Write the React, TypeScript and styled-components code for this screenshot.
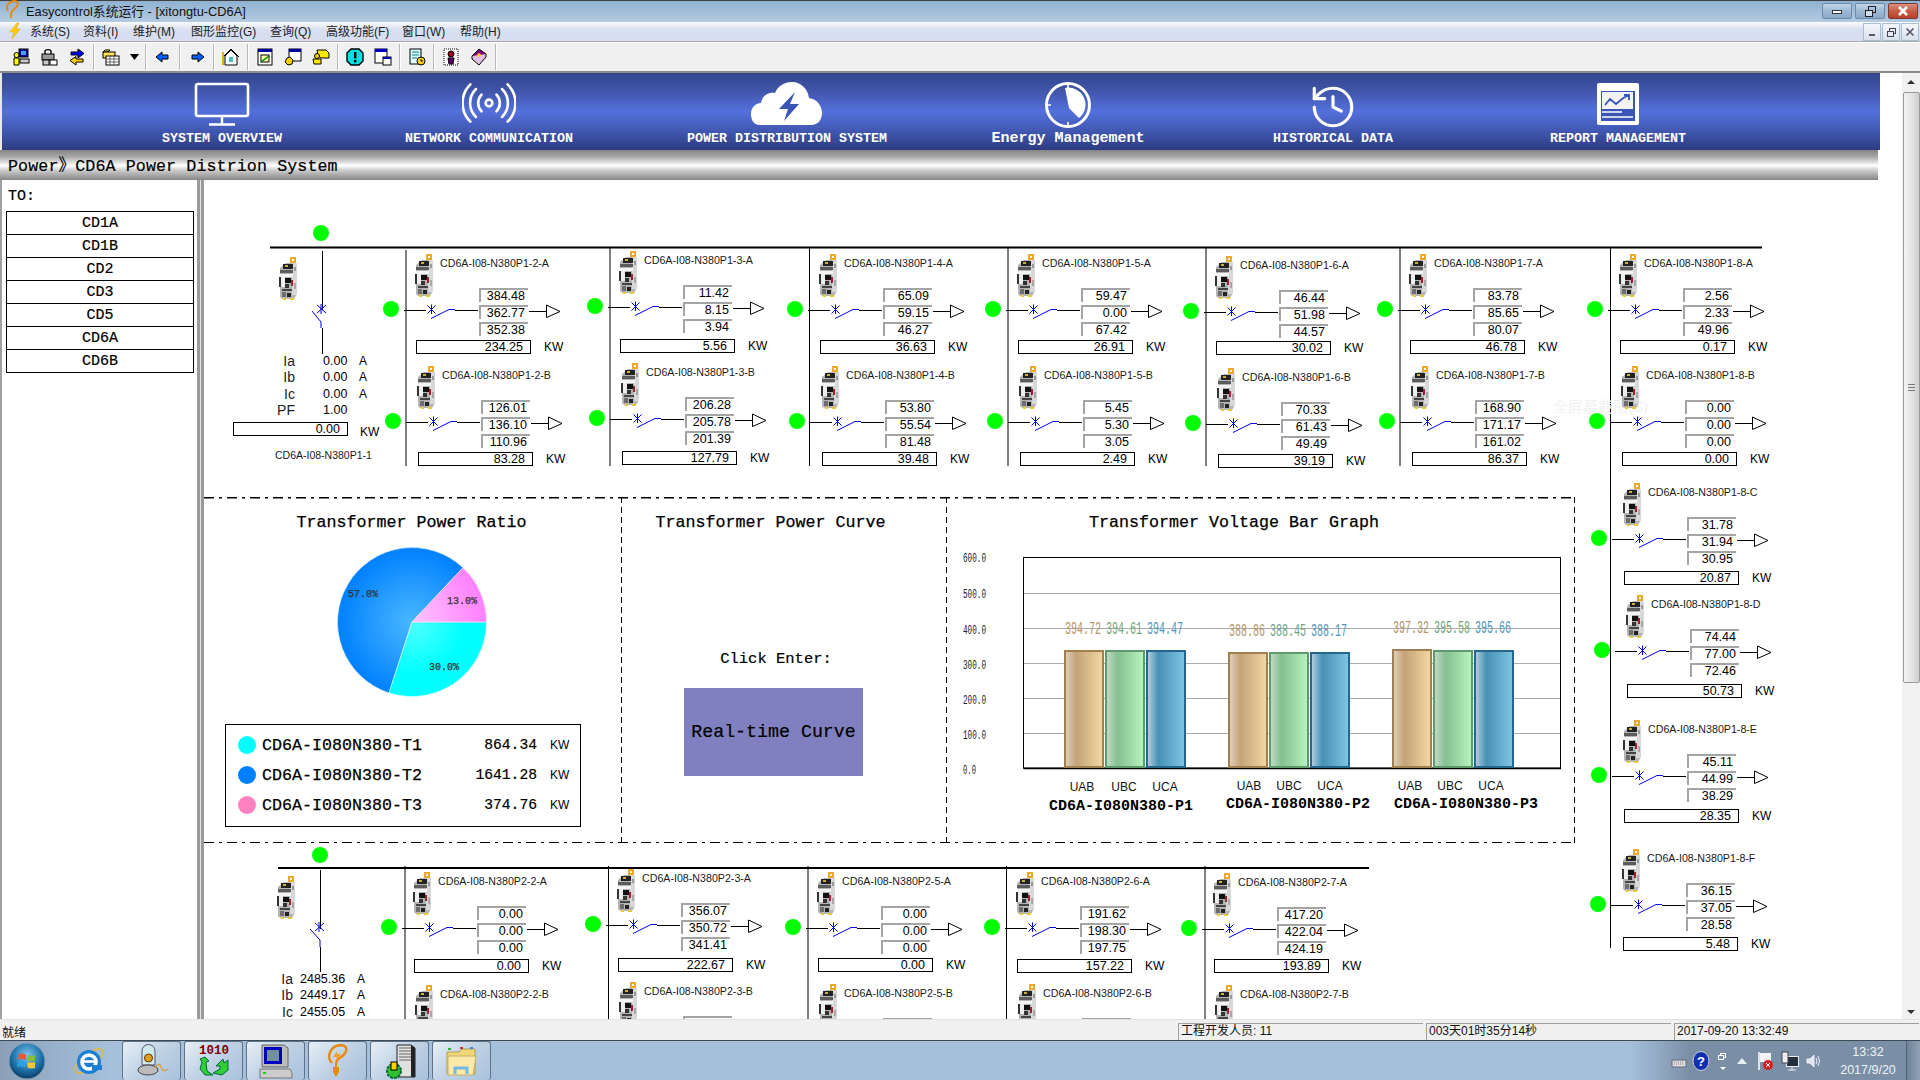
import React from "react";
import styled, { createGlobalStyle } from "styled-components";
import { History } from "lucide-react";

const MONO = '"Liberation Mono","Noto Sans CJK SC",monospace';
const SANS = '"Liberation Sans","Noto Sans CJK SC",sans-serif';

const Global = createGlobalStyle`
  html, body { margin: 0; padding: 0; width: 1920px; height: 1080px; overflow: hidden; background: #fff; }
  * { box-sizing: border-box; }
  #root { width: 1920px; height: 1080px; }
`;

const Shell = styled.div`
  width: 1920px; height: 1080px; display: flex; flex-direction: column; font-family: ${SANS}; color: #000; overflow: hidden;
`;

/* ---------- title bar ---------- */
const TitleBar = styled.div`
  height: 22px; flex: none; display: flex; align-items: center; padding: 0 0 3px 3px; gap: 5px; position: relative;
  border-top: 1px solid #404040;
  background: linear-gradient(#8fb2d2, #b4cbe1);
  font-size: 12.8px; color: #111;
`;
const CaptionGroup = styled.div`
  margin-left: auto; display: flex; gap: 3px; padding-right: 2px; align-self: flex-start; margin-top: 2px;
`;
const CaptionBtn = styled.div<{ $close?: boolean }>`
  width: 30px; height: 16px; border: 1px solid ${p => (p.$close ? "#7c3a33" : "#6c8aa8")}; border-radius: 2px;
  background: ${p => (p.$close ? "linear-gradient(#d9907e, #c75a3f 55%, #b8422c)" : "linear-gradient(#c3d6e8, #9db9d4 50%, #8ba9c8)")};
  display: flex; align-items: center; justify-content: center;
`;
const MenuBar = styled.div`
  height: 20px; flex: none; display: flex; align-items: center; font-size: 12px; color: #222;
  background: linear-gradient(#fafbfd, #d8dff0 40%, #d6ddef);
  border-bottom: 1px solid #a8a8a8; padding: 0 0 2px 8px;
`;
const MenuItem = styled.span<{ $w: number }>`
  width: ${p => p.$w}px; flex: none; white-space: nowrap;
`;
const MdiGroup = styled.div`
  margin-left: auto; display: flex; gap: 1px; padding-right: 1px; height: 18px; align-self: flex-start; margin-top: 1px;
`;
const MdiBtn = styled.div`
  width: 18px; height: 18px; border: 1px solid #a9bdd3; background: linear-gradient(#f4f7fb, #d8e0ef);
  display: flex; align-items: center; justify-content: center;
`;
const Toolbar = styled.div`
  height: 31px; flex: none; display: flex; align-items: center; padding-left: 7px; background: #f0f0f0;
  border-top: 1px solid #fff; border-bottom: 2px solid #8d8d8d; position: relative;
`;
const ToolBtn = styled.div<{ $w?: number }>`
  width: ${p => p.$w ?? 28}px; height: 22px; flex: none; display: flex; align-items: center; justify-content: center;
`;
const ToolSep = styled.div`
  width: 1px; height: 26px; background: #b8b8b8; margin: 0 2px; flex: none; border-right: 1px solid #fff; box-sizing: content-box;
`;
const Ic = styled.svg.attrs({ width: 18, height: 18, viewBox: "0 0 18 18" })`display: block;`;

/* ---------- workspace ---------- */
const Workspace = styled.div`
  flex: 1; min-height: 0; display: flex; background: #fff;
`;
const View = styled.div`
  flex: 1; min-width: 0; display: flex; flex-direction: column;
`;
const Banner = styled.div`
  height: 77px; flex: none; margin-right: 22px; display: flex; padding-left: 140px; padding-top: 9px;
  border-left: 2px solid #e8e8e8;
  background: linear-gradient(#34468e 0%, #3f55a8 22%, #5470dc 50%, #4057b0 76%, #2d3b80 100%);
`;
const NavItem = styled.div<{ $gap: number }>`
  width: 160px; margin-left: ${p => p.$gap}px; flex: none; display: flex; flex-direction: column; align-items: center; color: #fff;
`;
const NavIcon = styled.div`
  height: 49px; display: flex; align-items: flex-start; justify-content: center;
`;
const NavLabel = styled.div<{ $wide?: boolean }>`
  font: bold ${p => (p.$wide ? 15 : 13.33)}px/16px ${MONO}; white-space: nowrap; color: #fff;
`;
const Crumb = styled.div`
  height: 30px; flex: none; margin-right: 24px; padding: 0 0 2px 8px; display: flex; align-items: center;
  font: 16.67px ${MONO}; letter-spacing: .1px; color: #000; -webkit-text-stroke: .2px #000;
  background: linear-gradient(#858585 0%, #a6a6a6 22%, #d5d5d5 38%, #fff 52%, #d0d0d0 66%, #a8a8a8 84%, #868686 100%);
`;
const Body = styled.div`
  flex: 1; min-height: 0; display: flex;
`;
const Sidebar = styled.div`
  width: 197px; flex: none; border-left: 2px solid #a0a0a0; padding: 8px 0 0 4px; background: #fff;
`;
const ToLabel = styled.div`
  font: 15px/18px ${MONO}; margin-left: 2px; height: 23px; -webkit-text-stroke: .2px #000;
`;
const SideBtn = styled.div`
  width: 188px; height: 24px; margin-bottom: -1px; border: 1px solid #000; display: flex; align-items: center; justify-content: center;
  font: 15px ${MONO}; -webkit-text-stroke: .2px #000;
`;
const Divider = styled.div`
  width: 7px; flex: none; background: linear-gradient(90deg, #9a9a9a 0 3px, #e4e4e4 3px 4px, #9a9a9a 4px 7px);
`;
const Canvas = styled.div`
  position: relative; flex: 1; min-width: 0; overflow: hidden; background: #fff;
`;
const Wires = styled.svg`
  position: absolute; left: 0; top: 0; display: block;
`;
const Watermark = styled.div`
  position: absolute; left: 1349px; top: 215px; font-size: 15px; color: #f1f1f1; white-space: nowrap;
`;

/* ---------- scrollbar ---------- */
const ScrollBar = styled.div`
  width: 18px; flex: none; background: #f1f1f1; display: flex; flex-direction: column; align-items: center; position: relative; padding-top: 19px;
`;
const ScrollArrow = styled.div<{ $down?: boolean }>`
  position: absolute; ${p => (p.$down ? "bottom: 5px;" : "top: 7px;")} left: 5px; width: 0; height: 0;
  border-left: 4px solid transparent; border-right: 4px solid transparent;
  ${p => (p.$down ? "border-top: 4px solid #333;" : "border-bottom: 4px solid #333;")}
`;
const ScrollThumb = styled.div`
  width: 17px; height: 591px; border: 1px solid #9a9a9a; border-radius: 2px; background: linear-gradient(90deg, #f4f4f4, #e2e2e2 55%, #cfcfcf);
  display: flex; align-items: center; justify-content: center;
`;
const Grip = styled.div`
  width: 7px; height: 7px; background: repeating-linear-gradient(#777 0 1px, transparent 1px 3px);
`;

/* ---------- feeders ---------- */
const Feeder = styled.div<{ $x: number; $y: number }>`
  position: absolute; left: ${p => p.$x - 204}px; top: ${p => p.$y - 180}px; width: 0; height: 0;
`;
const Lamp = styled.div`
  position: absolute; left: -8px; top: -8px; width: 16px; height: 16px; border-radius: 50%; background: #00ff00;
`;
const FreeLamp = styled(Lamp) <{ $x: number; $y: number }>`
  left: ${p => p.$x - 212}px; top: ${p => p.$y - 188}px;
`;
const DeviceAt = styled.div`
  position: absolute; left: 24px; top: -55px;
`;
const FeederName = styled.div`
  position: absolute; left: 49px; top: -53px; font-size: 10.67px; line-height: 14px; white-space: nowrap; color: #1a1a1a;
`;
const FeederWire = styled.svg`
  position: absolute; left: 0; top: -20px; display: block;
`;
const Values = styled.div`
  position: absolute; left: 88px; top: -21px; width: 49px; display: flex; flex-direction: column; gap: 3px;
`;
const ValueCell = styled.div`
  height: 14px; border-left: 2px solid #a4a4a4; border-top: 2px solid #a4a4a4; padding-right: 3px;
  font-size: 12.5px; line-height: 12px; text-align: right; white-space: nowrap;
`;
const PowerBox = styled.div`
  width: 115px; height: 14px; border: 1px solid #000; padding-right: 7px; text-align: right; font-size: 12.5px; line-height: 12px; background: #fff;
`;
const PowerAt = styled.div<{ $dy: number }>`
  position: absolute; left: 25px; top: ${p => 31 + p.$dy}px;
`;
const KwAt = styled.span<{ $dy: number }>`
  position: absolute; left: 153px; top: ${p => 31 + p.$dy}px; font-size: 12px; line-height: 14px;
`;

const Incomer = styled.div<{ $x: number; $y: number; $cols: string }>`
  position: absolute; left: ${p => p.$x - 204}px; top: ${p => p.$y - 180}px;
  display: grid; grid-template-columns: ${p => p.$cols}; grid-auto-rows: 16.3px; align-items: center;
`;
const RLabel = styled.span`
  font-size: 14px; text-align: right; color: #222;
`;
const RValue = styled.span`font-size: 12.5px; white-space: nowrap;`;
const RUnit = styled.span`font-size: 12px;`;
const Placed = styled.div<{ $x: number; $y: number }>`
  position: absolute; left: ${p => p.$x - 204}px; top: ${p => p.$y - 180}px; white-space: nowrap;
`;
const SmallCaption = styled.span`font-size: 10.5px; color: #1a1a1a;`;

/* ---------- panels ---------- */
const Panels = styled.div`
  position: absolute; left: 0; top: 317px; width: 1371px; height: 346px; display: grid; grid-template-columns: 418px 325px 628px;
  background:
    repeating-linear-gradient(90deg, #000 0 10px, transparent 10px 15px, #000 15px 18px, transparent 18px 23px) top left / 100% 1.5px no-repeat,
    repeating-linear-gradient(90deg, #000 0 10px, transparent 10px 15px, #000 15px 18px, transparent 18px 23px) bottom left / 100% 1.5px no-repeat;
`;
const Panel = styled.div<{ $rule?: boolean }>`
  display: flex; flex-direction: column; align-items: center; padding-top: 17px;
  ${p => p.$rule ? `background: repeating-linear-gradient(#000 0 6px, transparent 6px 10px) right top / 1.5px 100% no-repeat;` : ""}
`;
const PanelTitle = styled.div<{ $shift?: number }>`
  font: 16.67px/18px ${MONO}; white-space: nowrap; margin-right: ${p => p.$shift ?? 0}px; -webkit-text-stroke: .25px #000;
`;
const PieWrap = styled.svg`
  display: block; margin-top: 14px; margin-right: 2px; flex: none;
`;
const Legend = styled.div`
  margin-top: 26px; margin-right: 20px; width: 356px; height: 103px; border: 1.5px solid #000; padding: 5px 0 0 12px;
  display: grid; grid-template-columns: 18px 184px 97px 44px; grid-auto-rows: 30px; align-items: center;
`;
const LegendDot = styled.span<{ $c: string }>`
  width: 18px; height: 18px; border-radius: 50%; background: ${p => p.$c};
`;
const LegendName = styled.span`
  font: 16.67px ${MONO}; padding-left: 6px; white-space: nowrap; -webkit-text-stroke: .25px #000;
`;
const LegendValue = styled.span`
  font: 14.67px ${MONO}; text-align: right; -webkit-text-stroke: .2px #000;
`;
const LegendUnit = styled.span`
  font-size: 12px; padding-left: 13px;
`;
const ClickText = styled.div`
  font: 15.5px ${MONO}; margin-top: 118px; margin-right: 17px; -webkit-text-stroke: .2px #000;
`;
const CurveBtn = styled.div`
  width: 179px; height: 88px; margin-top: 20px; margin-right: 22px; background: #8080c0; display: flex; align-items: center; justify-content: center;
  font: 18.3px ${MONO}; color: #000; -webkit-text-stroke: .2px #000;
`;
const ChartSvg = styled.svg`
  display: block; margin-top: 7px; flex: none;
`;

/* ---------- status / taskbar ---------- */
const StatusBar = styled.div`
  height: 21px; flex: none; background: #f0f0f0; display: flex; align-items: center; font-size: 12px; border-top: 1px solid #e2e2e2; padding: 2px 0 0 2px;
`;
const StatusReady = styled.span`width: 1176px; flex: none; color: #111;`;
const StatusPane = styled.div`
  width: 245px; height: 17px; flex: none; margin-right: 3px; border-top: 1px solid #a0a0a0; border-left: 1px solid #a0a0a0; padding-left: 2px; line-height: 15px; color: #111;
`;
const Taskbar = styled.div`
  height: 40px; flex: none; display: flex; align-items: stretch; position: relative; border-top: 1px solid #3d4a58;
  background: linear-gradient(90deg, #8aa0b8 0, #a6c0da 110px, #a6c0da 1630px, #7a8fa6 1690px, #7a8fa6 100%);
`;
const StartSlot = styled.div`
  width: 122px; flex: none; display: flex; align-items: center; padding-left: 8px; gap: 26px;
`;
const TaskBtn = styled.div`
  width: 59px; margin-right: 3px; flex: none; display: flex; align-items: center; justify-content: center;
  border: 1px solid #5f738a; border-radius: 3px; border-bottom: none;
  background: linear-gradient(135deg, #e8eff7, #bfd1e4 50%, #a9c2dc);
`;
const Tray = styled.div`
  margin-left: auto; display: flex; align-items: center; width: 252px;
`;
const TrayIcon = styled.div<{ $w: number }>`
  width: ${p => p.$w}px; flex: none; display: flex; justify-content: center;
`;
const Clock = styled.div`
  width: 76px; flex: none; text-align: center; color: #eef3f8; font-size: 12.5px; line-height: 18px;
`;
const ShowDesktop = styled.div`
  width: 14px; align-self: stretch; flex: none; border-left: 1px solid #4f6277; background: linear-gradient(90deg, #6f8398, #8ea1b5);
`;

/* ---------- drawings ---------- */
const Device = () => (
  <svg width="20" height="44" viewBox="0 0 20 44" style={{ display: "block" }}>
    <rect x="11" y="0" width="6" height="6" fill="#f0a828" />
    <rect x="13" y="2" width="2" height="2" fill="#fff" />
    <path d="M1 11 L7 6 H18 V37 L15 42 H3 L1 40Z" fill="#b4b4b4" />
    <rect x="13" y="6" width="5" height="32" fill="#d8d8d8" />
    <rect x="4" y="7" width="10" height="5" fill="#222" />
    <rect x="6" y="8" width="3" height="2" fill="#c8b040" />
    <rect x="1" y="13" width="13" height="3" fill="#5c5c5c" />
    <rect x="1" y="17" width="13" height="3" fill="#f4f4f4" />
    <rect x="1" y="20" width="5" height="10" fill="#eee" />
    <rect x="0" y="20" width="2" height="10" fill="#333" />
    <rect x="6" y="21" width="6" height="5" fill="#111" />
    <rect x="12" y="23" width="2" height="6" fill="#a02030" />
    <rect x="6" y="27" width="4" height="4" fill="#333" />
    <rect x="15" y="10" width="2" height="4" fill="#999" />
    <rect x="15" y="26" width="2" height="6" fill="#a8a8a8" />
    <rect x="3" y="32" width="10" height="2" fill="#444" />
    <rect x="3" y="35" width="4" height="5" fill="#6e6e6e" />
    <rect x="8" y="36" width="4" height="4" fill="#222" />
    <rect x="4" y="41" width="3" height="2" fill="#e8c838" />
    <rect x="11" y="41" width="4" height="2" fill="#e8c838" />
  </svg>
);

const wireBlue = "#0000ee";
const FeederWires = () => (
  <FeederWire width="172" height="40" viewBox="0 -20 172 40">
    <path d="M13 1.5H35M64 1.5H87M138 2.5H155" stroke="#000" fill="none" />
    <path d="M36.5 -3.5L44.5 4.5M36.5 4.5L44.5 -3.5M40.5 -4.5V5" stroke={wireBlue} fill="none" />
    <path d="M40 9.5L58 0.5H64" stroke={wireBlue} fill="none" />
    <path d="M155.5 -4V8.5L169 2.5Z" stroke="#000" fill="#fff" />
  </FeederWire>
);

type U = { x: number; y: number; name: string; v: string[]; pd?: number };
const Unit = ({ x, y, name, v, pd = 0 }: U) => (
  <Feeder $x={x} $y={y}>
    <FeederWires />
    <Lamp />
    <DeviceAt><Device /></DeviceAt>
    <FeederName>{name}</FeederName>
    <Values>
      {v.slice(0, 3).map((t, i) => <ValueCell key={i}>{t}</ValueCell>)}
    </Values>
    <PowerAt $dy={pd}><PowerBox>{v[3]}</PowerBox></PowerAt>
    <KwAt $dy={pd}>KW</KwAt>
  </Feeder>
);

const ND = "CD6A-I08-N380";
const units: U[] = [
  { x: 391, y: 309, name: ND + "P1-2-A", v: ["384.48", "362.77", "352.38", "234.25"] },
  { x: 595, y: 306, pd: 2, name: ND + "P1-3-A", v: ["11.42", "8.15", "3.94", "5.56"] },
  { x: 795, y: 309, name: ND + "P1-4-A", v: ["65.09", "59.15", "46.27", "36.63"] },
  { x: 993, y: 309, name: ND + "P1-5-A", v: ["59.47", "0.00", "67.42", "26.91"] },
  { x: 1191, y: 311, pd: -1, name: ND + "P1-6-A", v: ["46.44", "51.98", "44.57", "30.02"] },
  { x: 1385, y: 309, name: ND + "P1-7-A", v: ["83.78", "85.65", "80.07", "46.78"] },
  { x: 1595, y: 309, name: ND + "P1-8-A", v: ["2.56", "2.33", "49.96", "0.17"] },
  { x: 393, y: 421, name: ND + "P1-2-B", v: ["126.01", "136.10", "110.96", "83.28"] },
  { x: 597, y: 418, pd: 2, name: ND + "P1-3-B", v: ["206.28", "205.78", "201.39", "127.79"] },
  { x: 797, y: 421, name: ND + "P1-4-B", v: ["53.80", "55.54", "81.48", "39.48"] },
  { x: 995, y: 421, name: ND + "P1-5-B", v: ["5.45", "5.30", "3.05", "2.49"] },
  { x: 1193, y: 423, name: ND + "P1-6-B", v: ["70.33", "61.43", "49.49", "39.19"] },
  { x: 1387, y: 421, name: ND + "P1-7-B", v: ["168.90", "171.17", "161.02", "86.37"] },
  { x: 1597, y: 421, name: ND + "P1-8-B", v: ["0.00", "0.00", "0.00", "0.00"] },
  { x: 1599, y: 538, pd: 2, name: ND + "P1-8-C", v: ["31.78", "31.94", "30.95", "20.87"] },
  { x: 1602, y: 650, pd: 3, name: ND + "P1-8-D", v: ["74.44", "77.00", "72.46", "50.73"] },
  { x: 1599, y: 775, pd: 3, name: ND + "P1-8-E", v: ["45.11", "44.99", "38.29", "28.35"] },
  { x: 1598, y: 904, pd: 2, name: ND + "P1-8-F", v: ["36.15", "37.05", "28.58", "5.48"] },
  { x: 389, y: 927, pd: 1, name: ND + "P2-2-A", v: ["0.00", "0.00", "0.00", "0.00"] },
  { x: 593, y: 924, pd: 3, name: ND + "P2-3-A", v: ["356.07", "350.72", "341.41", "222.67"] },
  { x: 793, y: 927, name: ND + "P2-5-A", v: ["0.00", "0.00", "0.00", "0.00"] },
  { x: 992, y: 927, pd: 1, name: ND + "P2-6-A", v: ["191.62", "198.30", "197.75", "157.22"] },
  { x: 1189, y: 928, name: ND + "P2-7-A", v: ["417.20", "422.04", "424.19", "193.89"] },
  { x: 391, y: 1040, name: ND + "P2-2-B", v: ["", "", "", ""] },
  { x: 595, y: 1037, name: ND + "P2-3-B", v: ["", "", "", ""] },
  { x: 795, y: 1039, name: ND + "P2-5-B", v: ["", "", "", ""] },
  { x: 994, y: 1039, name: ND + "P2-6-B", v: ["", "", "", ""] },
  { x: 1191, y: 1040, name: ND + "P2-7-B", v: ["", "", "", ""] },
];

const BusWires = () => (
  <Wires width="1698" height="839" viewBox="204 180 1698 839">
    <g stroke="#000" fill="none">
      <path d="M270 247.5H1762M278 868H1369" strokeWidth="2.2" />
      <path d="M406 250V466M610 248V466M809.5 248V466M1008 248V466M1206 248V466M1400 248V466M1610.5 248V948" />
      <path d="M405 866V1019M608.5 866V1019M808 866V1019M1006.5 866V1019M1205 866V1019" />
      <path d="M322.5 251V310M322.5 328V354M320.5 870V929M320.5 947V972" />
    </g>
    <g stroke={wireBlue} fill="none">
      <path d="M317 305L326 313M317 313L326 305M321 304V314M312 311L321 322V328" />
      <path d="M315 923L324 931M315 931L324 923M319 922V932M310 929L320 940V947" />
    </g>
  </Wires>
);

const PieChart = () => (
  <PieWrap width="152" height="152" viewBox="-76 -76 152 152">
    <defs>
      <radialGradient id="gp" gradientUnits="userSpaceOnUse" cx="0" cy="0" r="74.5"><stop offset="0" stopColor="#ffc4ff" /><stop offset="1" stopColor="#ff80ff" /></radialGradient>
      <radialGradient id="gb" gradientUnits="userSpaceOnUse" cx="0" cy="0" r="74.5"><stop offset="0" stopColor="#4ab8ff" /><stop offset="1" stopColor="#0080ff" /></radialGradient>
      <radialGradient id="gc" gradientUnits="userSpaceOnUse" cx="0" cy="0" r="74.5"><stop offset="0" stopColor="#52ffff" /><stop offset=".7" stopColor="#00ffff" /></radialGradient>
    </defs>
    <path d="M0 0L-23 70.9A74.5 74.5 0 1 1 51 -54.3Z" fill="url(#gb)" stroke="#cfe6ff" strokeWidth=".6" />
    <path d="M0 0L74.5 0A74.5 74.5 0 0 1 -23 70.9Z" fill="url(#gc)" stroke="#e0ffff" strokeWidth=".6" />
    <path d="M0 0L51 -54.3A74.5 74.5 0 0 1 74.5 0Z" fill="url(#gp)" stroke="#ffe6ff" strokeWidth=".6" />
    <g fontFamily={MONO} fontSize="10" fill="#333" stroke="#333" strokeWidth=".25">
      <text x="-64" y="-25">57.0%</text>
      <text x="35" y="-18">13.0%</text>
      <text x="17" y="48">30.0%</text>
    </g>
  </PieWrap>
);

const barColors = [
  { id: "t", edge: "#a08050", txt: "#b39568", a: "#e0d2bf", b: "#c4a377", c: "#f4d7a4" },
  { id: "g", edge: "#5f9a6d", txt: "#6ea67c", a: "#c6dcca", b: "#84c090", c: "#b8f4bf" },
  { id: "b", edge: "#25688c", txt: "#4f95ba", a: "#b8d2e2", b: "#4690b4", c: "#80c6e6" },
];
const groups = [
  { xs: [1064, 1105, 1146], tops: [651, 651, 651], vals: ["394.72", "394.61", "394.47"], vy: 635, uy: 792, us: [1082, 1124, 1165], name: "CD6A-I080N380-P1", nx: 1049, ny: 811 },
  { xs: [1228, 1269, 1310], tops: [653, 653, 653], vals: ["388.86", "388.45", "388.17"], vy: 637, uy: 791, us: [1249, 1289, 1330], name: "CD6A-I080N380-P2", nx: 1226, ny: 809 },
  { xs: [1392, 1433, 1474], tops: [650, 651, 651], vals: ["397.32", "395.58", "395.66"], vy: 634, uy: 791, us: [1410, 1450, 1491], name: "CD6A-I080N380-P3", nx: 1394, ny: 809 },
];
const ticks = [["600.0", 559], ["500.0", 595], ["400.0", 631], ["300.0", 666], ["200.0", 701], ["100.0", 736], ["0.0", 771]] as const;

const BarChart = () => (
  <ChartSvg width="628" height="302" viewBox="947 540 628 302">
    <defs>
      {barColors.map(c => (
        <linearGradient key={c.id} id={"bar" + c.id} x1="0" x2="1" y1="0" y2="0">
          <stop offset="0" stopColor={c.a} /><stop offset=".3" stopColor={c.b} /><stop offset="1" stopColor={c.c} />
        </linearGradient>
      ))}
    </defs>
    <rect x="1023.5" y="558.5" width="537" height="210.5" fill="#fff" stroke="#000" />
    <path d="M1024 594.5H1560M1024 629.5H1560M1024 664.5H1560M1024 699.5H1560M1024 734.5H1560" stroke="#aaa" />
    <path d="M1023.5 769.5H1561" stroke="#000" strokeWidth="1.4" />
    {ticks.map(([t, y]) => (
      <text key={t} x="963" y={y + 4} fontFamily={MONO} fontSize="13" fill="#222" textLength={t.length === 3 ? 13 : 23} lengthAdjust="spacingAndGlyphs">{t}</text>
    ))}
    {groups.map(g => (
      <g key={g.name}>
        {g.xs.map((x, i) => (
          <g key={x}>
            <rect x={x + 1} y={g.tops[i] + 1} width="38" height={769 - g.tops[i] - 2} fill={`url(#bar${barColors[i].id})`} stroke={barColors[i].edge} strokeWidth="2" />
            <text x={x + 1} y={g.vy} fontFamily={MONO} fontSize="17.5" fill={barColors[i].txt} textLength="36" lengthAdjust="spacingAndGlyphs">{g.vals[i]}</text>
            <text x={g.us[i]} y={g.uy} textAnchor="middle" fontFamily={SANS} fontSize="12" fill="#111">{["UAB", "UBC", "UCA"][i]}</text>
          </g>
        ))}
        <text x={g.nx} y={g.ny} fontFamily={MONO} fontSize="15" fontWeight="bold" fill="#000">{g.name}</text>
      </g>
    ))}
  </ChartSvg>
);

const MonitorIcon = () => (
  <svg width="56" height="44" viewBox="0 0 56 44" fill="none" stroke="#fff">
    <rect x="2" y="2" width="52" height="32" rx="2" strokeWidth="2.6" />
    <path d="M28 34V42M15 42.5H41" strokeWidth="2.4" />
  </svg>
);
const WaveIcon = () => (
  <svg width="54" height="42" viewBox="0 0 58 44" fill="none" stroke="#fff" strokeWidth="2.8" strokeLinecap="round">
    <circle cx="29" cy="22" r="3.6" />
    <path d="M21 13A13 13 0 0 0 21 31M37 13A13 13 0 0 1 37 31" />
    <path d="M15 7A21 21 0 0 0 15 37M43 7A21 21 0 0 1 43 37" />
    <path d="M9 2A28 28 0 0 0 9 42M49 2A28 28 0 0 1 49 42" />
  </svg>
);
const CloudIcon = () => (
  <svg width="72" height="44" viewBox="0 0 72 44">
    <path d="M9 43C2 43 0 37 0 32C0 25 5 21 10 21C11 14 17 10 24 11C27 4 33 0 41 0C50 0 57 7 58 16C66 17 71 24 71 31C71 38 67 43 60 43Z" fill="#fff" />
    <path d="M44 10L28 27H37L33 39L48 22H39Z" fill="#3a54b8" />
  </svg>
);
const GaugeIcon = () => (
  <svg width="48" height="46" viewBox="0 0 48 46" fill="none" stroke="#fff">
    <circle cx="24" cy="23" r="21.5" strokeWidth="3" />
    <path d="M21 6A17 17 0 0 1 35 36L25 26Z" fill="#fff" stroke="none" />
    <path d="M24 2V6M24 40V44M3 23H7" strokeWidth="1.6" />
  </svg>
);
const ReportIcon = () => (
  <svg width="44" height="44" viewBox="0 0 44 44" fill="none">
    <rect x="1" y="1" width="42" height="42" rx="2" fill="#fff" />
    <rect x="5" y="9" width="34" height="30" fill="#3a54b8" />
    <rect x="6" y="10" width="31" height="17" fill="#f2f2f2" />
    <path d="M9 23L14 17L20 22L26 17L32 13M28 13H33V18" stroke="#3a54b8" strokeWidth="1.8" />
    <path d="M6 30H26M6 35H37" stroke="#fff" strokeWidth="1.5" />
  </svg>
);

const tb = {
  user: <Ic><rect x="7" y="1" width="9" height="8" fill="#0000a0" stroke="#000" /><rect x="9" y="3" width="5" height="4" fill="#40a0ff" /><rect x="8" y="11" width="9" height="4" fill="#ccc" stroke="#000" /><circle cx="4.5" cy="7" r="2.5" fill="#ff0" stroke="#000" /><path d="M2 10H7V17H2Z" fill="#ff0" stroke="#000" /></Ic>,
  lock: <Ic><path d="M5 6V3.5C5 1 11 1 11 3.5V6" stroke="#000" fill="none" strokeWidth="1.4" /><rect x="2" y="6" width="12" height="6" fill="#999" stroke="#000" /><rect x="3" y="12" width="6" height="5" fill="#ccc" stroke="#000" /><rect x="10" y="12" width="7" height="5" fill="#fff" stroke="#000" /></Ic>,
  swap: <Ic><path d="M3 4H10V1L16 5.5L10 10V7H3Z" fill="#0000ff" stroke="#000" /><path d="M15 11H8V8.5L2 12.5L8 17V14H15Z" fill="#ffd000" stroke="#000" /></Ic>,
  folder: <Ic><path d="M1 4H6L8 2H3Z" fill="#ff0" stroke="#000" /><rect x="1" y="4" width="12" height="6" fill="#ffe060" stroke="#000" /><rect x="4" y="8" width="13" height="9" fill="#fff" stroke="#000" /><path d="M4 11H17M4 14H17M8 8V17M12 8V17" stroke="#666" /></Ic>,
  left: <Ic><path d="M14 7H8V4L2 9L8 14V11H14Z" fill="#0060ff" stroke="#000" /></Ic>,
  right: <Ic><path d="M4 7H10V4L16 9L10 14V11H4Z" fill="#0060ff" stroke="#000" /></Ic>,
  house: <Ic><path d="M1 9L9 1L17 9" stroke="#000" fill="none" /><path d="M3 8V17H15V8L9 2Z" fill="#fff" stroke="#000" /><rect x="7" y="9" width="4" height="5" fill="#40c0c0" /><path d="M1 4V17" stroke="#e0b000" strokeWidth="2" /></Ic>,
  winImg: <Ic><rect x="2" y="1" width="14" height="16" fill="#fff" stroke="#000" /><rect x="2" y="1" width="14" height="3" fill="#0000a0" /><rect x="5" y="7" width="8" height="7" fill="#ffffa0" stroke="#000" /><path d="M5 14L13 8" stroke="#008000" strokeWidth="1.5" /></Ic>,
  winStar: <Ic><rect x="5" y="1" width="12" height="12" fill="#fff" stroke="#000" /><rect x="5" y="1" width="12" height="3" fill="#0000a0" /><path d="M4 17L1 14L3 10L6 9L9 12L8 16Z" fill="#ffd000" stroke="#000" /></Ic>,
  talk: <Ic><path d="M5 2H14L17 5V10H9L6 8Z" fill="#ffea00" stroke="#000" /><path d="M1 11H9V16H2Z" fill="#ffea00" stroke="#000" /><circle cx="5" cy="8" r="2.5" fill="#ffd000" stroke="#000" /></Ic>,
  alert: <Ic><path d="M5 1H13L17 5V13L13 17H5L1 13V5Z" fill="#00e0e0" stroke="#000" strokeWidth="1.4" /><rect x="8" y="4" width="2.4" height="6.5" fill="#000" /><rect x="8" y="12" width="2.4" height="2.4" fill="#000" /></Ic>,
  windows: <Ic><rect x="1" y="1" width="12" height="14" fill="#fff" stroke="#000" /><rect x="1" y="1" width="12" height="3" fill="#0000c0" /><rect x="9" y="9" width="8" height="8" fill="#fff" stroke="#000" /><rect x="9" y="9" width="8" height="2" fill="#0000c0" /></Ic>,
  doc: <Ic><rect x="2" y="1" width="11" height="15" fill="#e0ffff" stroke="#000" /><path d="M4 4H11M4 7H11M4 10H9" stroke="#008080" /><circle cx="13" cy="13" r="4" fill="#ffd000" stroke="#000" /><path d="M13 11V13H15" stroke="#000" fill="none" /></Ic>,
  person: <Ic><rect x="2" y="1" width="14" height="16" fill="#f8f8f8" stroke="#000" strokeDasharray="1 1" /><circle cx="9" cy="6" r="3" fill="#a00020" stroke="#000" /><path d="M6 10H12L11 16H7Z" fill="#600060" stroke="#000" /></Ic>,
  book: <Ic><path d="M2 8L9 1L16 6L9 14Z" fill="#800080" stroke="#000" /><path d="M2 8V11L9 17L16 9V6" fill="#e0c0e0" stroke="#000" /><circle cx="9" cy="7" r="1.8" fill="#ffd000" /></Ic>,
  caret: <svg width="9" height="6" viewBox="0 0 9 6" style={{ display: "block" }}><path d="M0 0H9L4.5 6Z" fill="#000" /></svg>,
};

const Orb = () => (
  <svg width="38" height="38" viewBox="0 0 38 38">
    <defs><radialGradient id="orb" cx=".5" cy=".35" r=".7"><stop offset="0" stopColor="#7fc6ef" /><stop offset=".6" stopColor="#1b6fa8" /><stop offset="1" stopColor="#0b3050" /></radialGradient></defs>
    <circle cx="19" cy="19" r="18" fill="url(#orb)" stroke="#8aa2b8" />
    <path d="M11 12Q14 11 18 12.5V18Q14 16.5 10 17.5Z" fill="#e85a30" />
    <path d="M19.5 13Q23 15 27 13V18.5Q23 20 19.5 18.5Z" fill="#7bc043" />
    <path d="M10 19Q14 18 18 19.5V25Q14 23.5 9 25Z" fill="#2f9fe0" />
    <path d="M19.5 20Q23 21.5 27 20V26Q23 27 19.5 25.5Z" fill="#f5c830" />
  </svg>
);
const IeLogo = () => (
  <svg width="34" height="34" viewBox="0 0 34 34">
    <ellipse cx="17" cy="17" rx="17" ry="7" transform="rotate(-40 17 17)" fill="none" stroke="#e0b840" strokeWidth="1.6" />
    <circle cx="17" cy="18" r="12" fill="#1c7fd4" />
    <circle cx="17" cy="18" r="7" fill="none" stroke="#fff" strokeWidth="3.6" />
    <path d="M9 17.5H25" stroke="#fff" strokeWidth="2.6" />
    <path d="M20 21H30V26H20Z" fill="#1c7fd4" />
  </svg>
);
const TaskIcons = [
  <svg key="a" width="34" height="36" viewBox="0 0 34 36"><path d="M7 22V8A6.5 6.5 0 0 1 20 8V22Z" fill="#cfe8e8" stroke="#557" /><circle cx="13.5" cy="15" r="4" fill="#e0a020" stroke="#630" /><ellipse cx="13" cy="27" rx="10" ry="5" fill="#bbb" stroke="#444" /><path d="M20 25Q24 18 26 24T33 26" stroke="#d8a040" fill="none" strokeWidth="1.4" /></svg>,
  <svg key="b" width="36" height="36" viewBox="0 0 36 36"><text x="18" y="11" textAnchor="middle" fontFamily={MONO} fontWeight="bold" fontSize="12.5" fill="#800000">1010</text><path d="M4 16L9 14L13 18L10 19L11 28L17 32L9 32L4 26L6 19Z" fill="#30d030" stroke="#064" /><path d="M32 17V27L26 32L17 30L24 26V23L20 23L27 16L28 20Z" fill="#30d030" stroke="#064" /></svg>,
  <svg key="c" width="36" height="36" viewBox="0 0 36 36"><path d="M4 2H26L30 5V24H4Z" fill="#bbb" stroke="#666" /><rect x="6" y="4" width="18" height="17" fill="#0000c0" /><rect x="9" y="7" width="12" height="11" fill="#7090a0" /><path d="M2 26H32L34 30V35H2Z" fill="#ccc" stroke="#777" /><rect x="5" y="29" width="3" height="2" fill="#20d020" /></svg>,
  <svg key="d" width="28" height="36" viewBox="0 0 28 36" fill="none"><path d="M8 20C2 14 6 2 18 2C26 4 22 12 14 16L12 20" stroke="#e88a10" strokeWidth="2.4" /><path d="M13 8L9 14H13L11 19L17 11H13Z" fill="#f4a020" /><path d="M12 20V24" stroke="#e88a10" strokeWidth="2" /><path d="M9 24H15V29L12 34L9 29Z" fill="#e88a10" /></svg>,
  <svg key="e" width="34" height="36" viewBox="0 0 34 36"><path d="M14 2H28L32 5V34H14Z" fill="#e0e0e0" stroke="#222" /><path d="M16 5H28M16 8H28M16 11H28M16 14H28M16 17H28" stroke="#666" /><path d="M28 2L32 5V34H28Z" fill="#222" /><circle cx="11" cy="28" r="7" fill="#30c030" stroke="#063" strokeDasharray="3 1" strokeWidth="2" /><rect x="8" y="19" width="6" height="8" fill="#ffd000" stroke="#000" /></svg>,
  <svg key="f" width="34" height="34" viewBox="0 0 34 34"><path d="M2 8H14L17 5H30V30H2Z" fill="#f0d77a" stroke="#b09a50" /><rect x="3" y="4" width="3" height="2" fill="#30b030" /><rect x="15" y="3" width="3" height="2" fill="#d03030" /><rect x="25" y="3" width="3" height="2" fill="#3090e0" /><path d="M3 12H31L28 31H3Z" fill="#fae9a8" stroke="#c8b060" /><path d="M10 30V24H22V30" stroke="#70b8e8" strokeWidth="3" fill="none" /></svg>,
];

const stroke = { stroke: "#fff", fill: "none" } as const;

export default function App() {
  return (
    <Shell>
      <Global />
      <TitleBar>
        <svg width="18" height="20" viewBox="0 0 18 20" fill="none"><path d="M5 11C2 6 6 1 12 1C17 2 15 7 10 10L8 13" stroke="#e88a10" strokeWidth="2" /><path d="M8 13V18" stroke="#e88a10" strokeWidth="2" /></svg>
        <span>Easycontrol系统运行 - [xitongtu-CD6A]</span>
        <CaptionGroup>
          <CaptionBtn><svg width="12" height="8"><rect x="1.5" y="3.5" width="9" height="3" fill="#fff" stroke="#333" /></svg></CaptionBtn>
          <CaptionBtn><svg width="13" height="13"><rect x="4.5" y="1.5" width="7" height="6" fill="none" stroke="#222" /><rect x="1.5" y="5.5" width="7" height="6" fill="#cde" stroke="#222" /></svg></CaptionBtn>
          <CaptionBtn $close><svg width="14" height="12"><path d="M3 2L11 10M11 2L3 10" stroke="#fff" strokeWidth="2.6" /></svg></CaptionBtn>
        </CaptionGroup>
      </TitleBar>
      <MenuBar>
        <svg width="14" height="18" viewBox="0 0 14 18" style={{ marginRight: 8, flex: "none" }}><path d="M9 1L2 10H6L4 17L12 7H8L11 1Z" fill="#ffcc00" stroke="#e8a000" strokeWidth=".5" /></svg>
        <MenuItem $w={53}>系统(S)</MenuItem>
        <MenuItem $w={50}>资料(I)</MenuItem>
        <MenuItem $w={58}>维护(M)</MenuItem>
        <MenuItem $w={79}>图形监控(G)</MenuItem>
        <MenuItem $w={56}>查询(Q)</MenuItem>
        <MenuItem $w={76}>高级功能(F)</MenuItem>
        <MenuItem $w={58}>窗口(W)</MenuItem>
        <MenuItem $w={60}>帮助(H)</MenuItem>
        <MdiGroup>
          <MdiBtn><svg width="10" height="10"><rect x="2" y="7" width="6" height="2" fill="#556" /></svg></MdiBtn>
          <MdiBtn><svg width="11" height="11"><rect x="3.5" y="1.5" width="6" height="5" fill="none" stroke="#445" /><rect x="1.5" y="4.5" width="6" height="5" fill="#e4e9f4" stroke="#445" /></svg></MdiBtn>
          <MdiBtn><svg width="10" height="10"><path d="M1.5 1.5L8.5 8.5M8.5 1.5L1.5 8.5" stroke="#556" strokeWidth="1.6" /></svg></MdiBtn>
        </MdiGroup>
      </MenuBar>
      <Toolbar>
        <ToolBtn>{tb.user}</ToolBtn><ToolBtn>{tb.lock}</ToolBtn><ToolBtn>{tb.swap}</ToolBtn><ToolSep />
        <ToolBtn>{tb.folder}</ToolBtn><ToolBtn $w={18}>{tb.caret}</ToolBtn><ToolSep />
        <ToolBtn>{tb.left}</ToolBtn><ToolSep />
        <ToolBtn>{tb.right}</ToolBtn><ToolSep />
        <ToolBtn>{tb.house}</ToolBtn><ToolSep />
        <ToolBtn>{tb.winImg}</ToolBtn><ToolBtn>{tb.winStar}</ToolBtn><ToolBtn>{tb.talk}</ToolBtn><ToolSep />
        <ToolBtn>{tb.alert}</ToolBtn><ToolBtn>{tb.windows}</ToolBtn><ToolSep />
        <ToolBtn>{tb.doc}</ToolBtn><ToolSep />
        <ToolBtn>{tb.person}</ToolBtn><ToolBtn>{tb.book}</ToolBtn><ToolSep />
      </Toolbar>
      <Workspace>
        <View>
          <Banner>
            <NavItem $gap={0}><NavIcon><MonitorIcon /></NavIcon><NavLabel>SYSTEM OVERVIEW</NavLabel></NavItem>
            <NavItem $gap={107}><NavIcon><WaveIcon /></NavIcon><NavLabel>NETWORK COMMUNICATION</NavLabel></NavItem>
            <NavItem $gap={138}><NavIcon><CloudIcon /></NavIcon><NavLabel>POWER DISTRIBUTION SYSTEM</NavLabel></NavItem>
            <NavItem $gap={121}><NavIcon><GaugeIcon /></NavIcon><NavLabel $wide>Energy Management</NavLabel></NavItem>
            <NavItem $gap={105}><NavIcon><History size={50} strokeWidth={1.5} {...stroke} /></NavIcon><NavLabel>HISTORICAL DATA</NavLabel></NavItem>
            <NavItem $gap={125}><NavIcon><ReportIcon /></NavIcon><NavLabel>REPORT MANAGEMENT</NavLabel></NavItem>
          </Banner>
          <Crumb>Power》CD6A Power Distrion System</Crumb>
          <Body>
            <Sidebar>
              <ToLabel>TO:</ToLabel>
              {["CD1A", "CD1B", "CD2", "CD3", "CD5", "CD6A", "CD6B"].map(t => <SideBtn key={t}>{t}</SideBtn>)}
            </Sidebar>
            <Divider />
            <Canvas>
              <BusWires />
              <Watermark>全屏幕截图(S)</Watermark>
              <FreeLamp $x={321} $y={233} />
              <FreeLamp $x={320} $y={855} />
              <Placed $x={279} $y={257}><Device /></Placed>
              <Placed $x={277} $y={876}><Device /></Placed>
              {units.map(u => <Unit key={u.name} {...u} />)}

              <Incomer $x={255} $y={353} $cols="40px 28px 36px 24px">
                <RLabel>Ia</RLabel><span /><RValue>0.00</RValue><RUnit>A</RUnit>
                <RLabel>Ib</RLabel><span /><RValue>0.00</RValue><RUnit>A</RUnit>
                <RLabel>Ic</RLabel><span /><RValue>0.00</RValue><RUnit>A</RUnit>
                <RLabel>PF</RLabel><span /><RValue>1.00</RValue><span />
              </Incomer>
              <Placed $x={233} $y={422}><PowerBox>0.00</PowerBox></Placed>
              <Placed $x={360} $y={422}><RUnit>KW</RUnit></Placed>
              <Placed $x={275} $y={445}><SmallCaption>CD6A-I08-N380P1-1</SmallCaption></Placed>

              <Incomer $x={273} $y={971} $cols="20px 7px 57px 24px">
                <RLabel>Ia</RLabel><span /><RValue>2485.36</RValue><RUnit>A</RUnit>
                <RLabel>Ib</RLabel><span /><RValue>2449.17</RValue><RUnit>A</RUnit>
                <RLabel>Ic</RLabel><span /><RValue>2455.05</RValue><RUnit>A</RUnit>
              </Incomer>

              <Panels>
                <Panel $rule>
                  <PanelTitle $shift={3}>Transformer Power Ratio</PanelTitle>
                  <PieChart />
                  <Legend>
                    <LegendDot $c="#00ffff" /><LegendName>CD6A-I080N380-T1</LegendName><LegendValue>864.34</LegendValue><LegendUnit>KW</LegendUnit>
                    <LegendDot $c="#0080ff" /><LegendName>CD6A-I080N380-T2</LegendName><LegendValue>1641.28</LegendValue><LegendUnit>KW</LegendUnit>
                    <LegendDot $c="#ff80c0" /><LegendName>CD6A-I080N380-T3</LegendName><LegendValue>374.76</LegendValue><LegendUnit>KW</LegendUnit>
                  </Legend>
                </Panel>
                <Panel $rule>
                  <PanelTitle $shift={28}>Transformer Power Curve</PanelTitle>
                  <ClickText>Click Enter:</ClickText>
                  <CurveBtn>Real-time Curve</CurveBtn>
                </Panel>
                <Panel $rule>
                  <PanelTitle $shift={54}>Transformer Voltage Bar Graph</PanelTitle>
                  <BarChart />
                </Panel>
              </Panels>
            </Canvas>
          </Body>
        </View>
        <ScrollBar>
          <ScrollArrow />
          <ScrollThumb><Grip /></ScrollThumb>
          <ScrollArrow $down />
        </ScrollBar>
      </Workspace>
      <StatusBar>
        <StatusReady>就绪</StatusReady>
        <StatusPane>工程开发人员: 11</StatusPane>
        <StatusPane>003天01时35分14秒</StatusPane>
        <StatusPane>2017-09-20 13:32:49</StatusPane>
      </StatusBar>
      <Taskbar>
        <StartSlot><Orb /><IeLogo /></StartSlot>
        {TaskIcons.map((ic, i) => <TaskBtn key={i}>{ic}</TaskBtn>)}
        <Tray>
          <TrayIcon $w={22}><svg width="16" height="16"><path d="M1 7H15V14H1Z" fill="#ddd" stroke="#667" /><path d="M3 9H13M3 11H13" stroke="#888" strokeDasharray="1 1" /><path d="M9 7C9 3 13 5 13 1" stroke="#889" fill="none" /></svg></TrayIcon>
          <TrayIcon $w={22}><svg width="18" height="20"><ellipse cx="9" cy="10" rx="8" ry="9.5" fill="#1030b0" stroke="#ccd" /><text x="9" y="15" textAnchor="middle" fontFamily={SANS} fontWeight="bold" fontSize="13" fill="#fff">?</text></svg></TrayIcon>
          <TrayIcon $w={22}><svg width="12" height="22"><rect x="3.5" y="3.5" width="5" height="4" fill="none" stroke="#fff" /><rect x="1.5" y="5.5" width="5" height="4" fill="#7a8fa6" stroke="#fff" /><path d="M3 17H9L6 20Z" fill="#fff" /></svg></TrayIcon>
          <TrayIcon $w={16}><svg width="12" height="8"><path d="M6 1L11 7H1Z" fill="#e8edf3" /></svg></TrayIcon>
          <TrayIcon $w={32}><svg width="18" height="20"><path d="M2 1V19" stroke="#fff" strokeWidth="1.5" /><path d="M3 2H14V11H3Z" fill="#f4f4f4" /><circle cx="11" cy="14" r="5" fill="#d82020" /><path d="M9 12L13 16M13 12L9 16" stroke="#fff" /></svg></TrayIcon>
          <TrayIcon $w={16}><svg width="18" height="20" fill="none" style={{ flex: "none" }}><rect x="5.5" y="5.5" width="12" height="10" fill="#22303e" stroke="#eee" /><path d="M11 15V19M7 19H15" stroke="#eee" /><rect x="1" y="1" width="6" height="11" fill="#eee" stroke="#445" /></svg></TrayIcon>
          <TrayIcon $w={32}><svg width="16" height="16" fill="none" stroke="#eef"><path d="M1 6H4L8 2V14L4 10H1Z" fill="#dfe6ee" /><path d="M10 5Q12 8 10 11M12 3Q15 8 12 13" /></svg></TrayIcon>
          <Clock>13:32<br />2017/9/20</Clock>
          <ShowDesktop />
        </Tray>
      </Taskbar>
    </Shell>
  );
}
